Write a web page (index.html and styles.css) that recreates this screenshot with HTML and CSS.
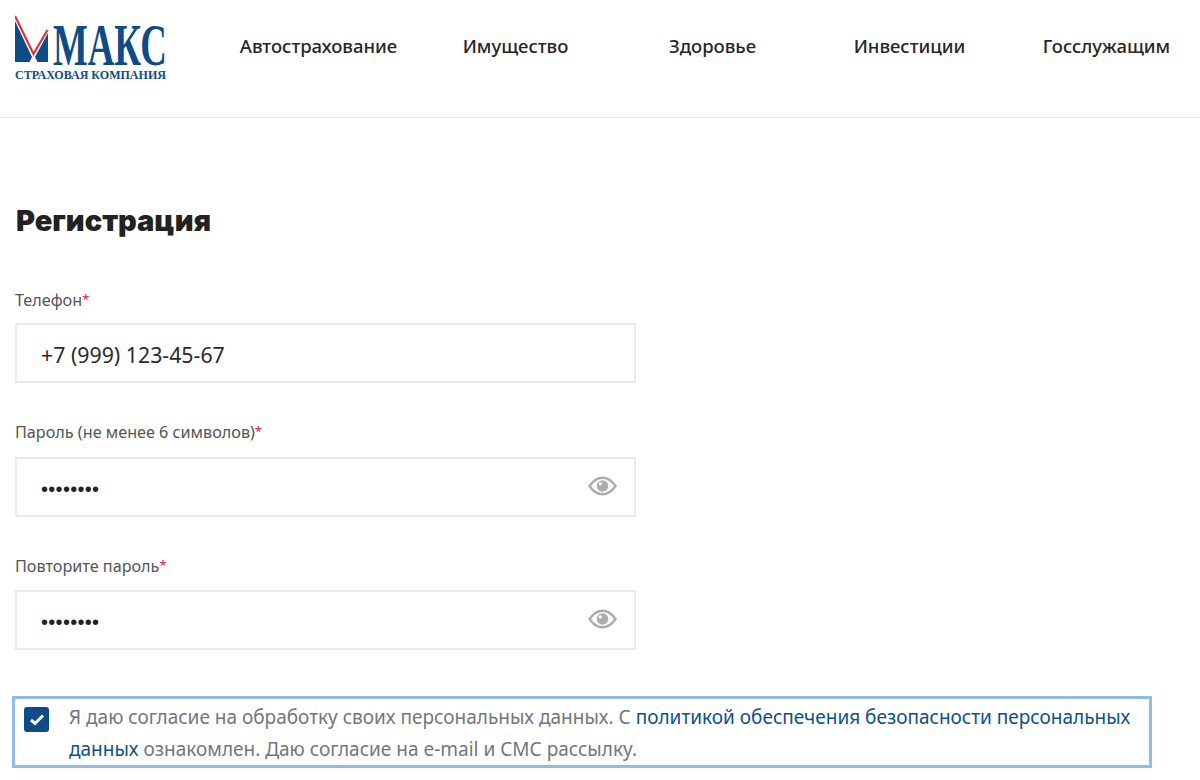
FILE: index.html
```html
<!DOCTYPE html>
<html lang="ru">
<head>
    <meta charset="UTF-8">
    <link rel="stylesheet" href="styles.css">
    <title>Регистрация</title>
</head>
<body>
    <header class="shapka">
        <a class="logo" href="#">
            <svg width="190" height="100" viewBox="15 0 190 100">
                <path d="M15 21 L32 57 L29.5 62 L15 62 Z" fill="#0f4c85"/>
                <path d="M48 33 L35 57 L37.5 62 L48 62 Z" fill="#0f4c85"/>
                <path d="M15 16 L33.5 54 L47.5 30" fill="none" stroke="#e0303f" stroke-width="2.2"/>
                <text class="logo-maks" transform="translate(53 65) scale(0.614 1)">МАКС</text>
                <text class="logo-podpis" x="15" y="79" textLength="151" lengthAdjust="spacingAndGlyphs">СТРАХОВАЯ КОМПАНИЯ</text>
            </svg>
        </a>
        <nav class="menu">
            <a href="#">Автострахование</a>
            <a href="#">Имущество</a>
            <a href="#">Здоровье</a>
            <a href="#">Инвестиции</a>
            <a href="#">Госслужащим</a>
        </nav>
    </header>

    <main class="forma">
        <h1>Регистрация</h1>

        <div class="pole">
            <label>Телефон<span class="zvezda">*</span></label>
            <div class="vvod vvod-tel">+7 (999) 123-45-67</div>
        </div>

        <div class="pole">
            <label>Пароль (не менее 6 символов)<span class="zvezda">*</span></label>
            <div class="vvod">
                <span class="tochki">••••••••</span>
                <svg class="glaz" width="29" height="20" viewBox="0 0 30 20">
                    <path d="M1.5 10 C6 3.5 10 1.5 15 1.5 C20 1.5 24 3.5 28.5 10 C24 16.5 20 18.5 15 18.5 C10 18.5 6 16.5 1.5 10 Z" fill="none" stroke="#acacac" stroke-width="2.4"/>
                    <circle cx="15" cy="10" r="6" fill="#acacac"/>
                    <circle cx="12.8" cy="7.8" r="1.8" fill="#fff"/>
                </svg>
            </div>
        </div>

        <div class="pole">
            <label>Повторите пароль<span class="zvezda">*</span></label>
            <div class="vvod">
                <span class="tochki">••••••••</span>
                <svg class="glaz" width="29" height="20" viewBox="0 0 30 20">
                    <path d="M1.5 10 C6 3.5 10 1.5 15 1.5 C20 1.5 24 3.5 28.5 10 C24 16.5 20 18.5 15 18.5 C10 18.5 6 16.5 1.5 10 Z" fill="none" stroke="#acacac" stroke-width="2.4"/>
                    <circle cx="15" cy="10" r="6" fill="#acacac"/>
                    <circle cx="12.8" cy="7.8" r="1.8" fill="#fff"/>
                </svg>
            </div>
        </div>

        <div class="soglasie">
            <div class="galka">
                <svg width="16" height="13" viewBox="0 0 16 13">
                    <path d="M2 7 L6 10.5 L14 2.5" fill="none" stroke="#fff" stroke-width="3"/>
                </svg>
            </div>
            <p>Я даю согласие на обработку своих персональных данных. С <a href="#">политикой обеспечения безопасности персональных</a> <a href="#">данных</a> ознакомлен. Даю согласие на e-mail и СМС рассылку.</p>
        </div>
    </main>
</body>
</html>
```

FILE: styles.css
```css
html, body {
    margin: 0;
    height: 100%;
    overflow: hidden;
    background-color: white;
}

body {
    font-family: "Noto Sans", sans-serif;
}

.shapka {
    display: flex;
    height: 117px;
    border-bottom: 1px solid #e4e4e4;
}

.logo {
    display: block;
    flex-shrink: 0;
    width: 205px;
    padding-left: 15px;
    box-sizing: border-box;
}

.logo text {
    font-family: "Liberation Serif", serif;
    font-weight: bold;
    fill: #0f4c85;
}

.logo-maks {
    font-size: 60px;
}

.logo-podpis {
    font-size: 11.5px;
}

.menu {
    display: grid;
    grid-template-columns: repeat(5, 197px);
    margin-left: 15px;
    height: 90px;
    align-items: center;
}

.menu a {
    text-align: center;
    color: #262626;
    font-size: 18.5px;
    font-weight: 500;
    text-decoration: none;
    white-space: nowrap;
}

.forma {
    padding: 0 15px;
}

h1 {
    margin: 83px 0 0 1px;
    font-family: Inter, sans-serif;
    font-size: 29px;
    line-height: 40px;
    font-weight: 900;
    color: #222;
}

.pole {
    width: 621px;
    margin-top: 46px;
}

.pole + .pole {
    margin-top: 36px;
}

label {
    display: block;
    height: 24px;
    margin-bottom: 12px;
    font-size: 16.2px;
    line-height: 24px;
    color: #555;
}

.pole + .pole label {
    margin-bottom: 13.5px;
}

.zvezda {
    font-size: 13px;
    vertical-align: 2px;
    color: #e0134f;
}

.vvod {
    display: flex;
    align-items: center;
    justify-content: space-between;
    height: 60px;
    padding: 0 17px 0 24px;
    border: 2px solid #ebebeb;
    box-sizing: border-box;
    font-size: 21.3px;
    color: #2b2b2b;
}

.vvod-tel {
    padding-top: 2px;
}

.tochki {
    font-family: "Liberation Sans", sans-serif;
    font-size: 20px;
    letter-spacing: 0.3px;
    color: #222;
    padding-top: 5px;
}

.glaz {
    margin-bottom: 2px;
}

.soglasie {
    display: flex;
    width: 1140px;
    height: 72px;
    margin: 46px 0 0 -3px;
    padding: 2px 15px 0 9px;
    border: 3px solid #8dbdea;
    box-sizing: border-box;
}

.galka {
    display: flex;
    align-items: center;
    justify-content: center;
    flex-shrink: 0;
    width: 25px;
    height: 25px;
    margin-top: 6px;
    background-color: #0f4c85;
    border-radius: 3px;
}

.soglasie p {
    margin: 0 0 0 20px;
    font-size: 19px;
    line-height: 32px;
    color: #73767a;
}

.soglasie a {
    color: #0f4f8a;
    text-decoration: none;
}
```
